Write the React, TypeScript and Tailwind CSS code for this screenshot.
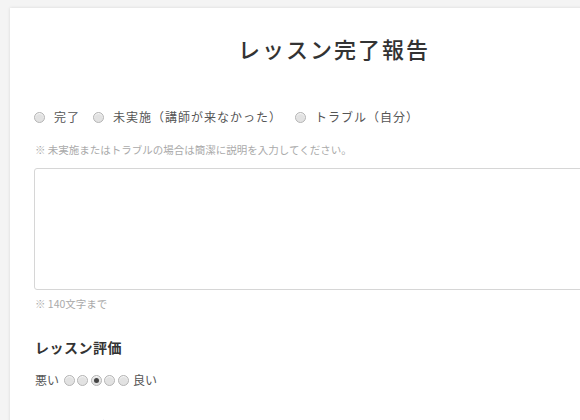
const font = { fontFamily: '"Noto Sans CJK JP", "Noto Sans", sans-serif' }

function Radio({ checked = false }: { checked?: boolean }) {
  return (
    <span className="inline-flex h-[11px] w-[11px] shrink-0 items-center justify-center rounded-full border border-[#b5b5b5] bg-[#e2e2e2] shadow-[inset_0_1px_1px_rgba(255,255,255,0.8)]">
      {checked && <span className="h-[5px] w-[5px] rounded-full bg-[#444]" />}
    </span>
  )
}

export default function App() {
  const statuses = ['完了', '未実施（講師が来なかった）', 'トラブル（自分）']

  return (
    <div className="h-[420px] w-[580px] overflow-hidden bg-[#f4f4f4] pl-[10px] pt-[8px]" style={font}>
      <div className="min-h-[500px] w-[648px] bg-white px-[24px] pt-[24px] shadow-[0_0_3px_rgba(0,0,0,0.12)]">
        <h1 className="text-center text-[22px] font-medium leading-[32px] tracking-[2px] text-[#333]">レッスン完了報告</h1>

        <div className="mt-[44px] flex items-center text-[12px] tracking-[1px] text-[#555]">
          {statuses.map((s, i) => (
            <label key={s} className={`flex items-center gap-[9px] ${i === 0 ? 'ml-[0px]' : i === 1 ? 'ml-[13px]' : 'ml-[13px]'}`}>
              <Radio />
              <span>{s}</span>
            </label>
          ))}
        </div>

        <p className="mt-[16px] pl-[1px] text-[10.5px] leading-[16px] text-[#aaa]">※ 未実施またはトラブルの場合は簡潔に説明を入力してください。</p>

        <textarea className="mt-[10px] block h-[122px] w-[640px] resize-none rounded-[3px] border border-[#d6d6d6] bg-white" />

        <p className="mt-[6px] pl-[1px] text-[10.5px] leading-[16px] text-[#aaa]">※ 140文字まで</p>

        <h2 className="mt-[24px] pl-[1px] text-[14px] font-bold leading-[22px] tracking-[0.5px] text-[#333]">レッスン評価</h2>

        <div className="mt-[13px] flex items-center gap-[2.5px] pl-[1px] text-[12px] leading-[18px] text-[#555]">
          <span className="mr-[2px]">悪い</span>
          {[0, 1, 2, 3, 4].map((n) => (
            <Radio key={n} checked={n === 2} />
          ))}
          <span className="ml-[2px]">良い</span>
        </div>

        <h2 className="mt-[26px] pl-[1px] text-[14px] font-bold leading-[22px] tracking-[0.5px] text-[#333]">レッスン感想</h2>
      </div>
    </div>
  )
}
